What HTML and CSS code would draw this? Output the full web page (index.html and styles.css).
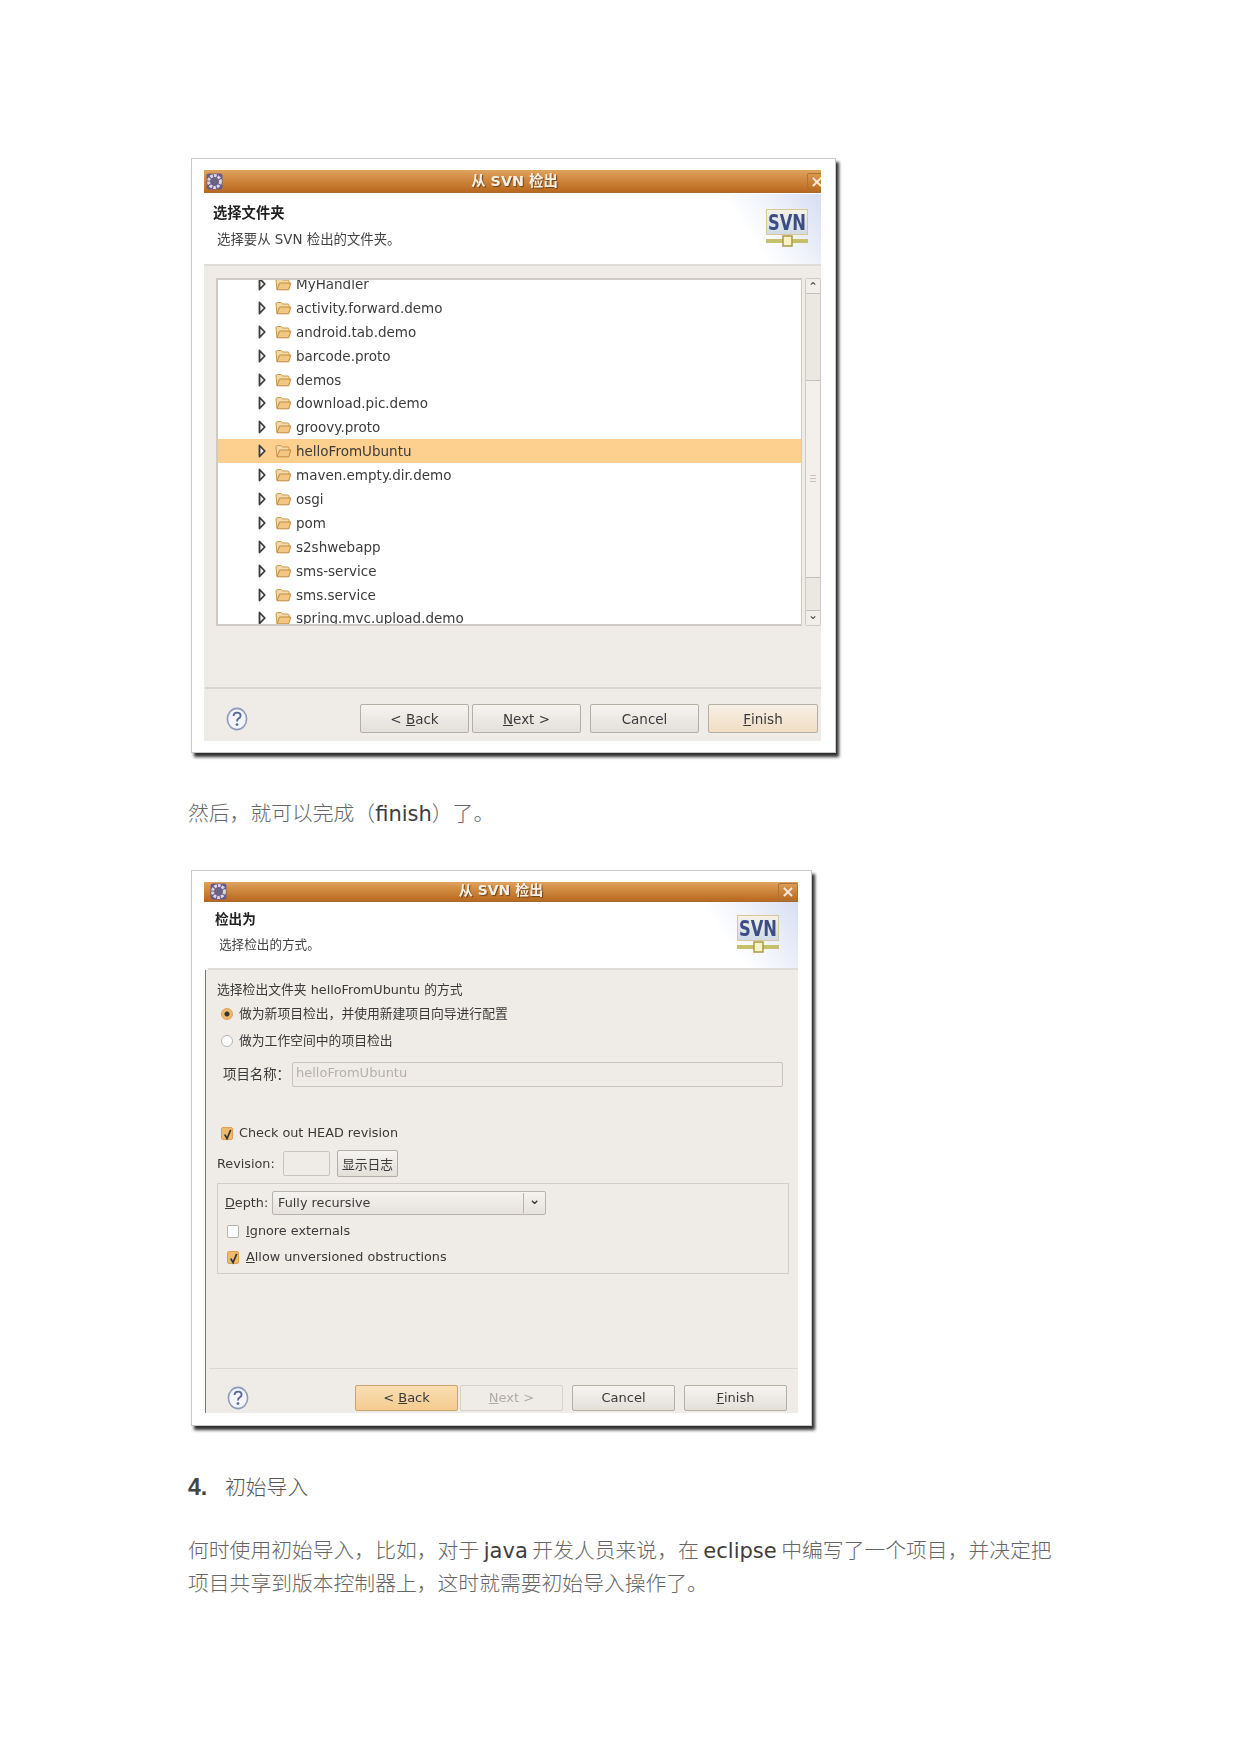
FILE: index.html
```html
<!DOCTYPE html>
<html lang="zh-CN">
<head>
<meta charset="utf-8">
<title>从 SVN 检出</title>
<link rel="stylesheet" href="styles.css">
</head>
<body>
<svg class="defs" width="0" height="0" aria-hidden="true">
  <symbol id="arrow" viewBox="0 0 8 14"><path d="M1.5 1.5 L6.8 7 L1.5 12.5 Z" fill="#f2efe9" stroke="#3c3c3c" stroke-width="1.8" stroke-linejoin="round"/></symbol>
  <symbol id="folder" viewBox="0 0 17 14"><path d="M2 12.5 L1 3 Q1 1.5 2.5 1.5 L6 1.5 L7.5 3 L13 3 Q14 3 14 4.5 L14 6" fill="#f3d9a8" stroke="#c9974a" stroke-width="1"/><path d="M2 12.8 L4.5 6 L15.8 6 L13.8 12.8 Z" fill="#f2c684" stroke="#c28b3c" stroke-width="1" stroke-linejoin="round"/></symbol>
  <symbol id="help" viewBox="0 0 22 24"><ellipse cx="11" cy="12" rx="9.6" ry="10.6" fill="#f4f5fa" stroke="#8d9bbd" stroke-width="1.6"/><path d="M7.5 9 Q7.8 5.6 11 5.6 Q14.6 5.6 14.6 8.6 Q14.6 10.6 12.4 11.6 Q11 12.4 11 14.6" fill="none" stroke="#5a6a98" stroke-width="1.9"/><circle cx="11" cy="17.6" r="1.4" fill="#5a6a98"/></symbol>
  <symbol id="gear" viewBox="0 0 16 16"><rect x="0.5" y="0.5" width="15" height="15" rx="2" fill="#6a5a8c"/><circle cx="8" cy="8" r="5.6" fill="none" stroke="#d9d7dc" stroke-width="2.8" stroke-dasharray="2.6 1"/><circle cx="8" cy="8" r="3" fill="#6a6480"/></symbol>
  <symbol id="svn" viewBox="0 0 42 38">
    <defs><linearGradient id="svnbg" x1="0" y1="0" x2="0" y2="1"><stop offset="0" stop-color="#f6f3e6"/><stop offset="1" stop-color="#cfdbe6"/></linearGradient></defs>
    <rect x="0.5" y="0.5" width="41" height="25" fill="url(#svnbg)" stroke="#d9c79a"/>
    <text x="21" y="21" text-anchor="middle" class="svn-text" textLength="38" lengthAdjust="spacingAndGlyphs">SVN</text>
    <rect x="0" y="30" width="42" height="4" fill="#c6c06a"/>
    <rect x="17" y="27" width="9" height="10" fill="#f8f2c8" stroke="#a99a3e" stroke-width="1.5"/>
  </symbol>
  <symbol id="tick" viewBox="0 0 12 14"><path d="M3 7 L5.5 11.5 L9.5 2" fill="none" stroke="#333" stroke-width="1.8"/></symbol>
</svg>

<main class="page">
  <section class="frame frame-one">
    <div class="inner inner-one">
      <header class="titlebar titlebar-one">
        <svg class="gear"><use href="#gear"/></svg>
        <span class="title-text">从 SVN 检出</span>
        <span class="close close-clip">×</span>
      </header>
      <div class="banner banner-one">
        <div class="banner-text">
          <div class="banner-title">选择文件夹</div>
          <div class="banner-sub">选择要从 SVN 检出的文件夹。</div>
        </div>
        <div class="banner-art"><svg class="svn-icon"><use href="#svn"/></svg></div>
      </div>
      <div class="body-one">
        <div class="list-row">
          <div class="tree">
            <div class="tree-scroll">
              <div class="row"><svg class="tw"><use href="#arrow"/></svg><svg class="fd"><use href="#folder"/></svg>MyHandler</div>
              <div class="row"><svg class="tw"><use href="#arrow"/></svg><svg class="fd"><use href="#folder"/></svg>activity.forward.demo</div>
              <div class="row"><svg class="tw"><use href="#arrow"/></svg><svg class="fd"><use href="#folder"/></svg>android.tab.demo</div>
              <div class="row"><svg class="tw"><use href="#arrow"/></svg><svg class="fd"><use href="#folder"/></svg>barcode.proto</div>
              <div class="row"><svg class="tw"><use href="#arrow"/></svg><svg class="fd"><use href="#folder"/></svg>demos</div>
              <div class="row"><svg class="tw"><use href="#arrow"/></svg><svg class="fd"><use href="#folder"/></svg>download.pic.demo</div>
              <div class="row"><svg class="tw"><use href="#arrow"/></svg><svg class="fd"><use href="#folder"/></svg>groovy.proto</div>
              <div class="row row-selected"><svg class="tw"><use href="#arrow"/></svg><svg class="fd"><use href="#folder"/></svg>helloFromUbuntu</div>
              <div class="row"><svg class="tw"><use href="#arrow"/></svg><svg class="fd"><use href="#folder"/></svg>maven.empty.dir.demo</div>
              <div class="row"><svg class="tw"><use href="#arrow"/></svg><svg class="fd"><use href="#folder"/></svg>osgi</div>
              <div class="row"><svg class="tw"><use href="#arrow"/></svg><svg class="fd"><use href="#folder"/></svg>pom</div>
              <div class="row"><svg class="tw"><use href="#arrow"/></svg><svg class="fd"><use href="#folder"/></svg>s2shwebapp</div>
              <div class="row"><svg class="tw"><use href="#arrow"/></svg><svg class="fd"><use href="#folder"/></svg>sms-service</div>
              <div class="row"><svg class="tw"><use href="#arrow"/></svg><svg class="fd"><use href="#folder"/></svg>sms.service</div>
              <div class="row"><svg class="tw"><use href="#arrow"/></svg><svg class="fd"><use href="#folder"/></svg>spring.mvc.upload.demo</div>
            </div>
          </div>
          <div class="scrollbar">
            <div class="sb-btn">⌃</div>
            <div class="sb-track"><div class="sb-thumb"><span class="sb-grip"></span></div></div>
            <div class="sb-btn sb-btn-down">⌄</div>
          </div>
        </div>
        <div class="sep sep-one"></div>
        <div class="footer footer-one">
          <svg class="help"><use href="#help"/></svg>
          <div class="btns">
            <span class="btn">&lt; <u>B</u>ack</span>
            <span class="btn btn-near"><u>N</u>ext &gt;</span>
            <span class="btn btn-far">Cancel</span>
            <span class="btn btn-far btn-warm btn-wide"><u>F</u>inish</span>
          </div>
        </div>
      </div>
    </div>
  </section>

  <p class="doc first-doc">然后，就可以完成（<span class="latin">finish</span>）了。</p>

  <section class="frame frame-two">
    <div class="inner inner-two">
      <header class="titlebar titlebar-two">
        <svg class="gear gear-two"><use href="#gear"/></svg>
        <span class="title-text">从 SVN 检出</span>
        <span class="close">×</span>
      </header>
      <div class="banner banner-two">
        <div class="banner-text banner-text-two">
          <div class="banner-title">检出为</div>
          <div class="banner-sub">选择检出的方式。</div>
        </div>
        <div class="banner-art banner-art-two"><svg class="svn-icon"><use href="#svn"/></svg></div>
      </div>
      <div class="body-two">
        <div class="line line-head">选择检出文件夹 helloFromUbuntu 的方式</div>
        <div class="line line-opt"><span class="radio radio-on"></span>做为新项目检出，并使用新建项目向导进行配置</div>
        <div class="line line-opt line-opt2"><span class="radio"></span>做为工作空间中的项目检出</div>
        <div class="name-row">
          <span class="name-label">项目名称：</span>
          <span class="input name-input">helloFromUbuntu</span>
        </div>
        <div class="line line-opt line-head-rev"><span class="check check-on"><svg class="tick"><use href="#tick"/></svg></span>Check out HEAD revision</div>
        <div class="rev-row">
          <span class="rev-label">Revision:</span>
          <span class="input rev-input"></span>
          <span class="btn rev-btn">显示日志</span>
        </div>
        <div class="group">
          <div class="depth-row">
            <span class="depth-label"><u>D</u>epth:</span>
            <span class="combo"><span class="combo-text">Fully recursive</span><span class="combo-arrow">⌄</span></span>
          </div>
          <div class="line line-group line-ignore"><span class="check"></span><span><u>I</u>gnore externals</span></div>
          <div class="line line-group line-allow"><span class="check check-on"><svg class="tick"><use href="#tick"/></svg></span><span><u>A</u>llow unversioned obstructions</span></div>
        </div>
        <div class="sep sep-two"></div>
        <div class="footer footer-two">
          <svg class="help"><use href="#help"/></svg>
          <div class="btns">
            <span class="btn btn-two btn-hot">&lt; <u>B</u>ack</span>
            <span class="btn btn-two btn-near btn-off"><u>N</u>ext &gt;</span>
            <span class="btn btn-two btn-far">Cancel</span>
            <span class="btn btn-two btn-far"><u>F</u>inish</span>
          </div>
        </div>
      </div>
    </div>
  </section>

  <h2 class="doc doc-head"><span class="num">4.</span>初始导入</h2>
  <p class="doc last-doc">何时使用初始导入，比如，对于 <span class="latin">java</span> 开发人员来说，在 <span class="latin">eclipse</span> 中编写了一个项目，并决定把项目共享到版本控制器上，这时就需要初始导入操作了。</p>
</main>
</body>
</html>
```
FILE: styles.css
```css
* { box-sizing: border-box; }
html, body { margin: 0; background: #fff; }
.defs { position: absolute; }
.page { padding: 158px 0 0 188px; width: 1241px; height: 1754px; overflow: hidden; }

.doc {
  margin: 0;
  font: 300 20.8px/32.4px "Noto Sans CJK SC", "DejaVu Sans", sans-serif;
  color: #666;
  width: 870px;
}
.latin { font-family: "DejaVu Sans", sans-serif; font-weight: 400; color: #3d3d3d; font-size: 21px; line-height: 1; }
.first-doc { margin-top: 43px; }
.doc-head { margin-top: 44px; height: 32px; color: #555; }
.num { font: 700 23px/1 "Liberation Sans", sans-serif; color: #444; display: inline-block; width: 37px; }
.last-doc { margin-top: 31px; }

.frame {
  margin-left: 3px;
  background: #fff;
  border: 1px solid #c9c9c9;
  box-shadow: 3px 4px 3px #2f2f2f;
  font: 13px/20px "DejaVu Sans", "Noto Sans CJK SC", sans-serif;
  color: #3a3a3a;
  filter: blur(0.5px);
}
.frame-one { width: 645px; height: 595px; padding: 11px 14px 11px 12px; }
.frame-two { width: 621px; height: 556px; padding: 11px 13px 12px 12px; margin-top: 42px; }
.inner { background: #fff; display: flex; flex-direction: column; height: 100%; }

.titlebar {
  display: flex;
  align-items: center;
  justify-content: center;
  position: relative;
  background: linear-gradient(#dfa35e 0%, #cf873e 45%, #b9681f 100%);
  border-bottom: 1px solid #a86a2c;
  flex: none;
  overflow: hidden;
}
.titlebar-one { height: 23px; margin-bottom: 1px; padding: 0 0 1px 4px; }
.titlebar-two { height: 20px; padding-bottom: 4px; }
.title-text {
  font: 700 14px/20px "DejaVu Sans", "Noto Sans CJK SC", sans-serif;
  color: #f6efe6;
  text-shadow: 1px 1px 1px #6a4218;
}
.titlebar-one .title-text { font-size: 14.4px; }
.gear { position: absolute; left: 2px; top: 3px; width: 17px; height: 17px; }
.gear-two { left: 6px; top: 1px; }
.close {
  position: absolute; right: 0; top: 1px; width: 20px; height: 18px;
  border: 1px solid #a9733d; border-radius: 2px;
  color: #f4ece2; font: 700 16px/15px "DejaVu Sans", sans-serif; text-align: center;
}
.close-clip { right: -6px; top: 3px; }

.banner {
  display: flex;
  justify-content: space-between;
  flex: none;
  background: #fff;
  border-bottom: 2px solid #dfdcd6;
}
.banner-one { height: 72px; }
.banner-two { height: 68px; margin-left: 4px; }
.banner-text { padding: 8px 0 0 9px; }
.banner-text-two { padding: 6px 0 0 7px; }
.banner-title { font: 700 13.6px/20px "Noto Sans CJK SC", sans-serif; color: #222; }
.banner-one .banner-title { font-size: 14.3px; }
.banner-sub { font: 12.6px/20px "DejaVu Sans", "Noto Sans CJK SC", sans-serif; margin: 7px 0 0 4px; color: #444; }
.banner-one .banner-sub { font-size: 13.4px; margin-top: 8px; }
.banner-art {
  width: 90px;
  background: linear-gradient(235deg, #d6def1 0%, #f2f4fb 45%, #fff 72%);
  padding: 15px 0 0 35px;
}
.banner-art-two { padding: 13px 0 0 29px; width: 90px; }
.svn-icon { width: 42px; height: 38px; display: block; }
.svn-text { font: 700 22px "DejaVu Sans", sans-serif; fill: #3b4c86; }

.body-one { flex: 1; background: #efebe6; padding: 12px 0 0 12px; display: flex; flex-direction: column; }
.list-row { display: flex; height: 348px; gap: 3px; flex: none; }
.tree {
  width: 586px; height: 348px; background: #fff;
  border: 2px solid #cfcbc4; border-right-width: 1px; border-bottom-width: 2px;
  overflow: hidden;
}
.tree-scroll { margin-top: -8px; }
.row {
  height: 23.9px; display: flex; align-items: center;
  font-size: 13.5px; color: #3c3c3c; padding-left: 40px;
}
.row-selected { background: #fdd08f; }
.tw { width: 8px; height: 14px; margin-right: 9px; flex: none; }
.fd { width: 17px; height: 14px; margin-right: 4px; flex: none; }
.scrollbar { width: 16px; display: flex; flex-direction: column; border: 1px solid #cfcbc4; border-radius: 2px; background: #ebe7e1; }
.sb-btn { height: 15px; flex: none; background: #f1eeea; border-bottom: 1px solid #c4c0b9; font: 12px/16px "DejaVu Sans", sans-serif; text-align: center; color: #444; }
.sb-btn-down { border-bottom: 0; border-top: 1px solid #c4c0b9; line-height: 8px; }
.sb-track { flex: 1; padding-top: 86px; padding-bottom: 32px; display: flex; }
.sb-thumb { flex: 1; background: #f3f0ec; border: 1px solid #c4c0b9; border-left: 0; border-right: 0; display: flex; align-items: center; justify-content: center; }
.sb-grip { width: 6px; height: 8px; background: repeating-linear-gradient(#c9c5be 0 1px, transparent 1px 3px); }

.sep { background: #dbd6d0; height: 2px; flex: none; }
.sep-one { margin: 61px 0 0 -11px; }
.footer { display: flex; align-items: center; justify-content: space-between; }
.footer-one { margin: 15px 3px 0 10px; }
.help { width: 22px; height: 24px; flex: none; }
.btns { display: flex; }
.btn {
  display: flex; align-items: center; justify-content: center;
  height: 29px; width: 109px;
  border: 1px solid #b3aea6; border-radius: 2px;
  background: linear-gradient(#f6f4f1, #e3dfd9);
  font: 13.5px/20px "DejaVu Sans", sans-serif; color: #3a3a3a;
  white-space: pre;
}
.btn-near { margin-left: 3px; }
.btn-far { margin-left: 9px; }
.btn-wide { width: 110px; }
.btn-warm { background: linear-gradient(#f8f0e6, #f0ddc4); }

.body-two {
  flex: 1; background: #efebe6; margin-left: 1px;
  border-left: 1px solid #777;
  padding: 8px 9px 0 11px;
  display: flex; flex-direction: column;
  font-size: 12.8px; color: #3a3a3a;
}
.line { height: 24px; display: flex; align-items: center; white-space: pre; flex: none; }
.line-opt { padding-left: 4px; }
.line-opt2 { margin-top: 3px; }
.line-head-rev { margin-top: 34px; }
.radio { width: 12px; height: 12px; border-radius: 50%; background: #fff; border: 1px solid #b9b4ab; margin-right: 6px; flex: none; }
.radio-on { background: radial-gradient(circle, #333 0 2px, #f2b869 3px); border-color: #e0a252; }
.check { width: 12px; height: 13px; border-radius: 2px; background: #fff; border: 1px solid #b9b4ab; margin-right: 6px; flex: none; display: block; }
.check-on { background: #f0ba6e; border-color: #df9f4e; }
.tick { width: 11px; height: 13px; display: block; }
.name-row { display: flex; align-items: center; margin-top: 9px; height: 25px; flex: none; padding-left: 6px; }
.name-label { width: 69px; font-size: 13.4px; white-space: nowrap; }
.input { height: 25px; border: 1px solid #c9c4bc; border-radius: 2px; background: #efebe6; display: block; }
.name-input { width: 491px; color: #b5b1aa; padding-left: 3px; font-size: 13px; line-height: 20px; }
.rev-row { display: flex; align-items: center; margin-top: 5px; height: 27px; flex: none; }
.rev-label { width: 66px; }
.rev-input { width: 47px; }
.rev-btn { width: 61px; height: 27px; margin-left: 7px; font-size: 12.8px; font-family: "Noto Sans CJK SC", sans-serif; }
.group { margin-top: 6px; height: 91px; flex: none; border: 1px solid #d3cec6; padding: 7px 0 0 7px; }
.depth-row { display: flex; align-items: center; height: 24px; }
.depth-label { width: 47px; }
.combo {
  width: 274px; height: 24px; display: flex; justify-content: space-between;
  border: 1px solid #b9b4ab; border-radius: 2px;
  background: linear-gradient(#f5f3f0, #e6e2dc);
}
.combo-text { padding-left: 5px; line-height: 22px; }
.combo-arrow { width: 22px; border-left: 1px solid #b9b4ab; text-align: center; font: 700 14px/12px "DejaVu Sans", sans-serif; margin: 1px 0; }
.line-group { padding-left: 2px; }
.line-ignore { margin-top: 4px; }
.line-allow { margin-top: 2px; }
.line-group .check { margin-right: 7px; }
.sep-two { margin: 94px -9px 0 -8px; height: 1px; }
.footer-two { margin: 16px 2px 0 10px; }
.footer-two .help { margin-top: -1px; }
.btn-two { height: 26px; width: 103px; font-size: 13px; }
.btn-two.btn-near { margin-left: 2px; }
.btn-hot { background: linear-gradient(#f9dfb4, #f4cb8e); border-color: #c9a46c; }
.btn-off { color: #b0aca5; background: #efebe6; border-color: #d6d1ca; }
```
